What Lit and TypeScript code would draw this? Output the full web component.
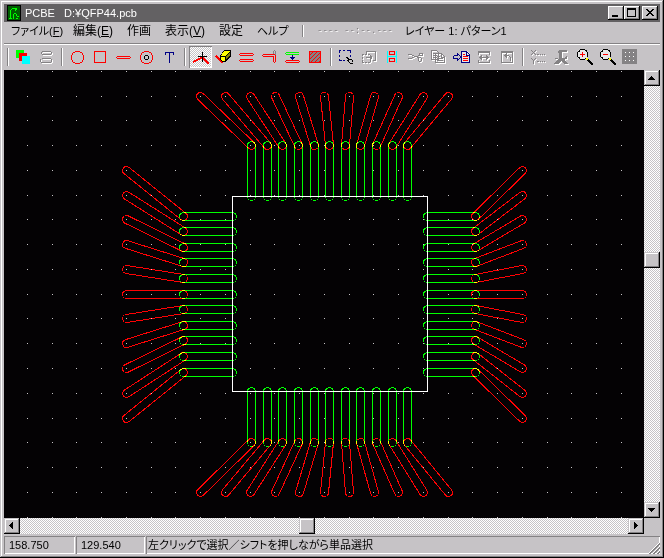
import { LitElement, html, svg, css, SVGTemplateResult } from "lit";
import { customElement } from "lit/decorators.js";
import { classMap } from "lit/directives/class-map.js";

type Point = [number, number];

/* ---------- toolbar glyphs, each on a 23 x 22 grid ---------- */

const stroke = (d: string, color: string, width = 1) =>
  svg`<path d=${d} fill="none" stroke=${color} stroke-width=${width}></path>`;
const fill = (d: string, color: string) => svg`<path d=${d} fill=${color}></path>`;

/** Engraved look of a disabled tool: white copy one pixel down-right. */
const engraved = (d: string, solid = "") => svg`
  <g fill-rule="evenodd">
    <g transform="translate(1 1)">${stroke(d, "#fff")}${fill(solid, "#fff")}</g>
    ${stroke(d, "#848284")}${fill(solid, "#848284")}
  </g>`;

const RED = "#f00";
const NAVY = "#000084";
const RING = "M9 5.5h5M14 6.5h2M16.5 7v2M17.5 9v5M16.5 14v2M14 16.5h2M9 17.5h5M7 16.5h2M6.5 14v2M5.5 9v5M6.5 7v2M7 6.5h2";

const lens = (sign: string) => svg`
  ${fill("M7 3h5v1h2v2h1v5h-1v2h-2v1h-5v-1h-2v-2h-1v-5h1v-2h2z", "#e7e7e7")}
  ${stroke("M7 3.5h5M5 5.5h1v-1h1M12 4.5h1v1M4.5 6v5M14.5 6v5M5 11.5h1v1h1M7 13.5h5M12 12.5h1", "#000")}
  ${stroke(sign, RED)}
  ${fill("M13 12h2v1h1v2h-2v-1h-1z", "#ff0")}
  ${stroke("M15 14L20 19", "#000", 2)}`;

const glyphs: Record<string, SVGTemplateResult> = {
  layers: svg`${fill("M4 4h8v8h-8z", "#0f0")}${fill("M7 7h8v8h-8z", RED)}${fill("M10 10h8v8h-8z", "#0ff")}`,
  ovals: engraved("M7 5.5h9M6 6.5h1M16 6.5h1M6 7.5h1M16 7.5h1M7 8.5h9M7 12.5h9M5.5 13v3M16.5 13v3M6 16.5h10"),
  circle: stroke(RING, RED),
  square: stroke("M5.5 5.5h11v11h-11z", RED),
  line: stroke("M5 10.5h13M5 12.5h13M4.5 11v1M18.5 11v1", RED),
  donut: svg`${stroke(RING, RED)}${stroke("M10 9.5h3M13.5 10v3M10 13.5h3M9.5 10v3", "#000")}`,
  text: stroke("M7 6.5h9M7.5 6v3M15.5 6v3M11.5 6v11", NAVY),
  track: svg`${stroke("M4 16L11 12.5L14 12L20 18", RED, 2)}${stroke("M13.5 6v10M9 10.5h9", "#000")}`,
  eraser: svg`${stroke("M4 10L10 16L12 15", RED, 2)}
    ${fill("M12 4h6l1 1v5l-6 6h-3l-2-2v-4z", "#000")}
    ${fill("M12 5h6l-5 5h-4z", "#ff0")}${fill("M9 11h4v4h-3l-1-1z", "#ff0")}${fill("M14 11l4-5v3l-4 5z", "#848200")}`,
  parallel: stroke("M5 7.5h13M5 9.5h13M4.5 8v1M18.5 8v1M5 13.5h13M5 15.5h13M4.5 14v1M18.5 14v1", RED),
  corner: svg`${stroke("M15.5 9v-4M17.5 9v-4M16 4.5h1", "#848284")}${stroke("M5 8.5h12M5 10.5h10M4.5 9v1M15.5 10v6M17.5 9v7M16 16.5h1", RED)}`,
  spacing: svg`${stroke("M6 6.5h12M6 8.5h12M4.5 7v1M5 6.5h1M5 8.5h1", "#0f0")}${stroke("M5 14.5h13M5 16.5h13M4.5 15v1M18.5 15v1", RED)}${stroke("M11.5 9v5M9 11.5h5M10 12.5h3", NAVY)}`,
  hatch: svg`${fill("M5 5h12v12h-12z", "#848284")}${stroke("M5.5 5.5h11v11h-11zM5 10L10 5M5 14L14 5M6 17L17 6M10 17L17 10M14 17L17 14", RED)}`,
  select: svg`${stroke("M4 4.5h2M8 4.5h2M12 4.5h3M4.5 4v3M4.5 9v2M4.5 13v2M15.5 4v3M15.5 9v2M5 14.5h2M8 14.5h2", NAVY)}
    ${stroke("M11 11.5h2M12 12.5h2M13 13.5h4M12 14.5h2M17.5 14v2M13 15.5h1M14 16.5h1M15 17.5h3", "#000")}`,
  place: engraved("M8 5.5h10M17.5 5v10M8.5 5v3M15 14.5h3M4 8.5h2M7 8.5h2M10 8.5h2M4.5 9v1M4.5 11v2M4.5 14v2M4 16.5h2M7 16.5h2M10 16.5h2M12.5 14v2M8 11.5h6M12.5 9v5M13.5 10v3"),
  flip: svg`${stroke("M6.5 5v12M15.5 5v12M6 10.5h10", "#0ff")}${stroke("M8.5 5.5h5v3h-5zM8.5 12.5h5v3h-5z", RED)}`,
  cut: engraved("M4 8.5h4M4 12.5h4M8 9.5h2M8 11.5h2M10 10.5h4M14 9.5h1v-2h3v2h-3M13 11.5h2M14.5 12v3M17.5 12v3M15 15.5h2M15 11.5h2"),
  copy: engraved("M4.5 4.5h5l2 2v7h-7zM6 7.5h2M6 9.5h4M6 11.5h4M8.5 7.5h6l3 3v6h-9zM10 10.5h3M10 12.5h6M10 14.5h6M14.5 8v3h3"),
  insert: svg`${stroke("M3.5 9.5h4M3.5 12.5h4M3.5 9.5v3M7.5 7v3M7.5 12v3M8.5 8v1M9.5 9v1M10.5 10v2M9.5 12v1M8.5 13v1", NAVY)}
    ${fill("M11 5h6l3 3v9h-9z", "#e7e7e7")}${stroke("M11.5 5.5h5l3 3v8h-8zM16.5 5v4h3", NAVY)}${stroke("M13 8.5h2M13 10.5h5M13 12.5h5M13 14.5h5", RED)}`,
  mirror: engraved("M6 11.5h10M8.5 9v5M7.5 10v3M13.5 9v5M14.5 10v3", "M5 5h12v4h-1v-2h-10v2h-1zM5 14h1v2h10v-2h1v3h-12z"),
  rotate: engraved("M8 9.5h5M14.5 11v4M13.5 10v1M9.5 8v3M10.5 7v5", "M5 5h12v12h-12zM6 7v9h10v-9z"),
  xy: engraved("M4 4.5h1M8 4.5h1M5 5.5h1M7 5.5h1M6 6.5h1M5 7.5h1M7 7.5h1M4 8.5h1M8 8.5h1M4 12.5h1M8 12.5h1M5 13.5h1M7 13.5h1M6.5 14v4M10 8.5h2M13 8.5h1M15 8.5h1M17 8.5h1M10 15.5h2M13 15.5h1M15 15.5h1M17 15.5h1"),
  jig: engraved("M5 12.5h3", "M9 4h8v2h-5v6h2l2-2h1v3h-2l-1 1 4 3v1h-4l-3-3-3 3h-4v-1l4-4h1v-6h-1z"),
  zoomIn: lens("M9.5 6v5M7 8.5h5"),
  zoomOut: lens("M7 8.5h5"),
  grid: svg`${fill("M3 3h15v15h-15z", "#848284")}${fill(
    [6, 10, 14].flatMap((y) => [6, 10, 14].map((x) => `M${x} ${y}h1v1h-1z`)).join(""), "#fff")}`,
};

const toolGroups: { name: string; label: string; state?: "pressed" | "disabled" }[][] = [
  [{ name: "layers", label: "レイヤー" }, { name: "ovals", label: "アパーチャ", state: "disabled" }],
  [
    { name: "circle", label: "円" }, { name: "square", label: "四角" }, { name: "line", label: "ライン" },
    { name: "donut", label: "ランド" }, { name: "text", label: "文字" },
  ],
  [
    { name: "track", label: "選択", state: "pressed" }, { name: "eraser", label: "消しゴム" },
    { name: "parallel", label: "平行" }, { name: "corner", label: "角" },
    { name: "spacing", label: "間隔" }, { name: "hatch", label: "塗りつぶし" },
  ],
  [
    { name: "select", label: "範囲選択" }, { name: "place", label: "配置", state: "disabled" },
    { name: "flip", label: "反転" }, { name: "cut", label: "切り取り", state: "disabled" },
    { name: "copy", label: "コピー", state: "disabled" }, { name: "insert", label: "貼り付け" },
    { name: "mirror", label: "左右反転", state: "disabled" }, { name: "rotate", label: "回転", state: "disabled" },
  ],
  [
    { name: "xy", label: "座標", state: "disabled" }, { name: "jig", label: "原点", state: "disabled" },
    { name: "zoomIn", label: "拡大" }, { name: "zoomOut", label: "縮小" }, { name: "grid", label: "グリッド" },
  ],
];

@customElement("pcb-toolbar")
export class PcbToolbar extends LitElement {
  static styles = css`
    :host { display: flex; align-items: center; height: 26px; }
    .separator { width: 8px; height: 18px; display: flex; justify-content: center; flex: none; }
    .separator::before { content: ""; width: 1px; border-right: 1px solid #fff; background: #848284; }
    .tool { width: 23px; height: 22px; padding: 0; border: 0; background: none; flex: none; display: block; }
    .tool svg { display: block; width: 23px; height: 22px; shape-rendering: crispEdges; }
    .pressed {
      background: repeating-conic-gradient(#fff 0 25%, #c6c3c6 0 50%) 0 0 / 2px 2px;
      box-shadow: inset 1px 1px #848284, inset -1px -1px #fff;
    }
  `;
  render() {
    return toolGroups.map((group) => html`
      <span class="separator"></span>
      ${group.map((tool) => html`
        <button class=${classMap({ tool: true, pressed: tool.state === "pressed" })}
          aria-label=${tool.label} ?disabled=${tool.state === "disabled"}>
          <svg viewBox="0 0 23 22" aria-hidden="true">${glyphs[tool.name]}</svg>
        </button>`)}`);
  }
}

/* ---------- board drawing ---------- */

const PITCH = 24.75;
/* Pad and fan-out positions along a side, measured from its middle pad or grid point. */
const padColumns = [-78, -62, -47, -31, -15, 0, 16, 31, 47, 63, 78];
const padRows = [-78, -63, -47, -32, -16, 0, 15, 31, 46, 62, 78];
const fanColumns = [-124, -99, -74, -49, -25, 0, 25, 50, 74, 99, 124];
const fanRows = [-124, -99, -75, -50, -25, 0, 24, 49, 74, 99, 124];
const CENTER: Point = [325, 224];

/** Outline of a round-ended track. */
function capsule([x1, y1]: Point, [x2, y2]: Point, r = 4) {
  const length = Math.hypot(x2 - x1, y2 - y1);
  const nx = (-(y2 - y1) / length) * r;
  const ny = ((x2 - x1) / length) * r;
  return `M${x1 + nx} ${y1 + ny}A${r} ${r} 0 0 1 ${x1 - nx} ${y1 - ny}L${x2 - nx} ${y2 - ny}A${r} ${r} 0 0 1 ${x2 + nx} ${y2 + ny}Z`;
}

@customElement("pcb-board")
export class PcbBoard extends LitElement {
  static styles = css`
    :host { display: block; background: #040204; overflow: hidden; min-width: 0; min-height: 0; contain: size; }
    .board { display: block; width: 100%; height: 100%; shape-rendering: crispEdges; }
    .dots { fill: #c6c3c6; }
    .pads { fill: none; stroke: #0f0; }
    .tracks { fill: none; stroke: #f00; }
    .tracks path { mix-blend-mode: screen; }
    .body { fill: none; stroke: #fff; }
  `;
  render() {
    const [cx, cy] = [CENTER[0] + 0.5, CENTER[1] + 0.5];
    const gx = cx - 5;
    const pads: string[] = [];
    const tracks: string[] = [];
    padColumns.forEach((column, i) => {
      const x = cx + column;
      const y = cy + padRows[i];
      const fanX = gx + fanColumns[i];
      const fanY = cy + fanRows[i];
      pads.push(
        capsule([x, cy - 149], [x, cy - 98]), capsule([x, cy + 97], [x, cy + 148]),
        capsule([cx - 146, y], [cx - 97, y]), capsule([cx + 98, y], [cx + 146, y]));
      tracks.push(
        capsule([x, cy - 149], [fanX, cy - 198]), capsule([x, cy + 148], [fanX, cy + 198]),
        capsule([cx - 146, y], [cx - 203, fanY]), capsule([cx + 146, y], [cx + 193, fanY]));
    });
    const dots: string[] = [];
    for (let row = 0; row < 48; row++)
      for (let col = 0; col < 64; col++)
        dots.push(`M${Math.round(22.9 + col * PITCH)} ${Math.floor(1.37 + row * 24.76)}h1v1h-1z`);
    return html`<svg class="board" role="img" aria-label="QFP44">
      <path class="dots" d=${dots.join("")}></path>
      <g class="pads">${pads.map((d) => svg`<path d=${d}></path>`)}</g>
      <g class="tracks">${tracks.map((d) => svg`<path d=${d}></path>`)}</g>
      <rect class="body" x="228.5" y="126.5" width="195" height="195"></rect>
    </svg>`;
  }
}

/* ---------- scroll bar ---------- */

@customElement("pcb-scrollbar")
export class PcbScrollbar extends LitElement {
  static properties = { vertical: { type: Boolean, reflect: true }, value: { type: Number }, label: {} };
  declare vertical: boolean;
  declare value: number;
  declare label: string;
  static styles = css`
    :host {
      display: flex; min-width: 0; min-height: 0;
      background: repeating-conic-gradient(#fff 0 25%, #c6c3c6 0 50%) 0 0 / 2px 2px;
    }
    :host([vertical]) { flex-direction: column; }
    .step {
      flex: none; width: 16px; height: 16px; padding: 0; border: 0; background: #c6c3c6;
      box-shadow: inset -1px -1px #000, inset 1px 1px #c6c3c6, inset -2px -2px #848284, inset 2px 2px #fff;
    }
    .step svg { display: block; width: 16px; height: 16px; shape-rendering: crispEdges; }
    .track {
      appearance: none; flex: 1; min-width: 0; min-height: 0; margin: 0; background: none; height: 16px; outline: 0;
    }
    .upright { writing-mode: vertical-lr; width: 16px; height: auto; }
    .track::-webkit-slider-thumb {
      appearance: none; width: 16px; height: 16px; border-radius: 0; background: #c6c3c6;
      box-shadow: inset -1px -1px #000, inset 1px 1px #c6c3c6, inset -2px -2px #848284, inset 2px 2px #fff;
    }
  `;
  render() {
    const back = this.vertical ? "M7 6h1v1h1v1h1v1h1v1H4v-1h1v-1h1v-1h1z" : "M9 4v7h-1v-1h-1v-1h-1v-1h-1v-1h1v-1h1v-1h1v-1z";
    const ahead = this.vertical ? "M4 6h7v1h-1v1h-1v1h-1v1h-1v-1h-1v-1h-1v-1h-1z" : "M6 4h1v1h1v1h1v1h1v1h-1v1h-1v1h-1v1h-1z";
    return html`
      <button class="step" aria-label="${this.label} −"><svg viewBox="0 0 16 16"><path d=${back}></path></svg></button>
      <input class=${classMap({ track: true, upright: this.vertical })} type="range" min="0" max="1000"
        .value=${String(this.value)} aria-label=${this.label} />
      <button class="step" aria-label="${this.label} +"><svg viewBox="0 0 16 16"><path d=${ahead}></path></svg></button>`;
  }
}

/* ---------- window ---------- */

@customElement("app-root")
export class AppRoot extends LitElement {
  static styles = css`
    :host {
      display: block; height: 100vh; box-sizing: border-box; overflow: hidden;
      background: #c6c3c6; color: #000;
      font: 12px/16px "Liberation Sans", "Noto Sans CJK JP", sans-serif;
      font-feature-settings: "palt";
    }
    .window {
      display: flex; flex-direction: column; height: 100%; box-sizing: border-box; padding: 4px;
      box-shadow: inset -1px -1px #000, inset 1px 1px #c6c3c6, inset -2px -2px #848284, inset 2px 2px #fff;
    }
    .titlebar {
      display: flex; align-items: center; height: 18px; flex: none; background: #636163; color: #fff;
      padding: 0 2px 0 3px; box-sizing: border-box;
    }
    .appicon { width: 14px; height: 16px; display: block; margin-right: 4px; shape-rendering: crispEdges; flex: none; }
    .title { margin: 0; font-size: 11px; font-weight: 400; white-space: pre; flex: 1; }
    .caption {
      width: 16px; height: 14px; padding: 0; border: 0; background: #c6c3c6; flex: none;
      box-shadow: inset -1px -1px #000, inset 1px 1px #fff, inset -2px -2px #848284;
    }
    .caption svg { display: block; width: 16px; height: 14px; shape-rendering: crispEdges; }
    .close { margin-left: 2px; }
    .menubar {
      display: grid; grid-template-columns: 62px 54px 38px 54px 38px 45px 15px 88px 1fr; align-items: center;
      height: 22px; box-sizing: border-box; padding: 0 0 4px 7px; flex: none;
      border-bottom: 1px solid #848284; box-shadow: 0 1px #fff;
    }
    .menu {
      font: inherit; font-feature-settings: inherit; color: inherit; white-space: nowrap;
      padding: 0; border: 0; background: none; text-align: left;
    }
    .kana { font-size: 11px; }
    .divider { width: 1px; height: 12px; background: #848284; border-right: 1px solid #fff; }
    .clock { color: #848284; text-shadow: 1px 1px #fff; white-space: pre; font-family: "Liberation Mono", monospace; font-size: 9px; }
    .toolbar { flex: none; }
    .workspace {
      flex: 1; min-height: 0; display: grid;
      grid-template: minmax(0, 1fr) 16px / minmax(0, 1fr) 16px;
    }
    .status {
      display: grid; grid-template-columns: 71px 69px minmax(0, 1fr); gap: 1px; flex: none;
      padding-top: 2px; height: 20px; box-sizing: border-box; font-size: 11px;
    }
    .cell {
      box-shadow: inset 1px 1px #848284, inset -1px -1px #fff; padding-left: 5px; line-height: 18px;
      white-space: nowrap; overflow: hidden;
    }
    .message { display: flex; justify-content: space-between; padding-left: 2px; }
    .grip { width: 12px; height: 12px; align-self: flex-end; shape-rendering: crispEdges; flex: none; }
  `;
  render() {
    return html`<main class="window">
      <header class="titlebar">
        <svg class="appicon" viewBox="0 0 14 16" aria-hidden="true">
          <path fill="#000" d="M0 0h14v16H0z"></path><path fill="#005d00" d="M1 1h12v14H1z"></path>
          <path fill="none" stroke="#0f0" d="M2 13.5h3M3.5 5v9M4.5 4v1M5 3.5h3M8.5 3v3M9.5 3v2M6.5 9v5M7 8.5h2M9.5 9v2M10 11.5h2M9 13.5h2"></path>
        </svg>
        <h1 class="title">PCBE   D:¥QFP44.pcb</h1>
        <button class="caption" aria-label="最小化"><svg viewBox="0 0 16 14"><path d="M4 9h6v2H4z"></path></svg></button>
        <button class="caption" aria-label="最大化"><svg viewBox="0 0 16 14"><path fill-rule="evenodd" d="M3 2h9v9H3zM4 4v6h7V4z"></path></svg></button>
        <button class="caption close" aria-label="閉じる"><svg viewBox="0 0 16 14"><path d="M4 3h2v1h1v1h2V4h1V3h2v1h-1v1h-1v1H9v1h1v1h1v1h1v1h-2V9H9V8H7v1H6v1H4V9h1V8h1V7h1V6H6V5H5V4H4z"></path></svg></button>
      </header>
      <nav class="menubar">
        <button class="menu kana">ファイル(<u>F</u>)</button>
        <button class="menu">編集(<u>E</u>)</button>
        <button class="menu">作画</button>
        <button class="menu">表示(<u>V</u>)</button>
        <button class="menu">設定</button>
        <button class="menu kana">ヘルプ</button>
        <span class="divider"></span>
        <span class="clock">---- --:--.---</span>
        <span class="kana">レイヤー 1: パターン1</span>
      </nav>
      <pcb-toolbar class="toolbar"></pcb-toolbar>
      <section class="workspace">
        <pcb-board></pcb-board>
        <pcb-scrollbar vertical .value=${415} label="縦スクロール"></pcb-scrollbar>
        <pcb-scrollbar .value=${471} label="横スクロール"></pcb-scrollbar>
      </section>
      <footer class="status">
        <span class="cell">158.750</span>
        <span class="cell">129.540</span>
        <span class="cell message">左クリックで選択／シフトを押しながら単品選択
          <svg class="grip" viewBox="0 0 12 12" aria-hidden="true">
            <path d="M0 12L12 0M4 12L12 4M8 12L12 8" stroke="#fff"></path>
            <path d="M1 12L12 1M2 12L12 2M5 12L12 5M6 12L12 6M9 12L12 9M10 12L12 10" stroke="#848284"></path>
          </svg>
        </span>
      </footer>
    </main>`;
  }
}
